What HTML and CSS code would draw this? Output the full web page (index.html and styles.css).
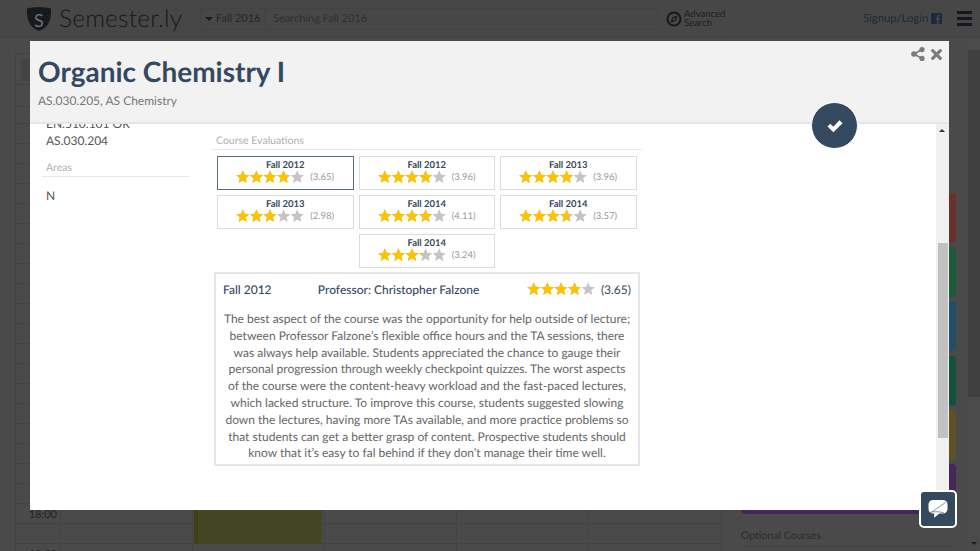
FILE: index.html
```html
<!DOCTYPE html>
<html lang="en">
<head>
    <meta charset="UTF-8">
    <meta name="viewport" content="width=device-width, initial-scale=1.0">
    <title>Semester.ly</title>
    <link rel="stylesheet" href="styles.css">
</head>
<body>
    <svg class="defs" width="0" height="0">
        <symbol id="five" viewBox="0 0 68 14">
            <path id="st" d="M6.800 .3L8.680 4.710 13.460 5.140 9.840 8.290 10.910 12.960 6.800 10.500 2.690 12.960 3.760 8.290 .14 5.140 4.920 4.710z"/>
            <use href="#st" x="13.600"/>
            <use href="#st" x="27.200"/>
            <use href="#st" x="40.800"/>
            <use href="#st" x="54.400"/>
        </symbol>
    </svg>

    <header class="topbar">
        <svg class="logo" viewBox="0 0 26 26">
            <path d="M1 2.500C6 .8 20 .8 25 2.500c.3 10-1 18-12 22.500C2 20.500 .7 12.500 1 2.500z" fill="#161a1e"/>
            <text x="13" y="21" text-anchor="middle" class="logo-s">S</text>
        </svg>
        <span class="brand">Semester.ly</span>
        <div class="search">
            <span class="term"><i class="caret"></i>Fall 2016</span>
            <span class="search-text">Searching Fall 2016</span>
        </div>
        <div class="advanced">
            <svg width="16" height="16" viewBox="0 0 16 16">
                <circle cx="8" cy="8" r="6.500" fill="none" stroke="#15181b" stroke-width="2"/>
                <path d="M10.500 5.500L9.300 9.300 5.500 10.500 6.700 6.700z" fill="none" stroke="#15181b" stroke-width="1.200"/>
            </svg>
            <span class="advanced-text">Advanced<br>Search</span>
        </div>
        <span class="login">Signup/Login</span>
        <svg class="fb" viewBox="0 0 12 12">
            <path d="M1.500 0h9A1.500 1.500 0 0 1 12 1.500v9a1.500 1.500 0 0 1-1.500 1.500H8.300V7.400h1.500l.2-1.800H8.300V4.500c0-.5.2-.9.9-.9h.9V2c-.4 0-.8-.1-1.300-.1-1.400 0-2.300.9-2.300 2.400v1.300H5v1.800h1.500V12h-5A1.500 1.500 0 0 1 0 10.500v-9A1.500 1.500 0 0 1 1.500 0z" fill="#1c2a3c"/>
        </svg>
        <div class="burger"><i></i><i></i><i></i></div>
    </header>

    <div class="page">
        <section class="calendar">
            <div class="cal-edge">
                <div class="cal-tool"><i></i></div>
                <div class="cal-tool-low"></div>
            </div>
            <div class="cal-grid">
                <div class="times"><span>18:00</span><span>19:00</span></div>
                <div class="day"></div>
                <div class="day"><div class="slot"></div></div>
                <div class="day"></div>
                <div class="day"></div>
                <div class="day"></div>
            </div>
        </section>
        <aside class="side">
            <div class="side-list">
                <div class="side-slot red"></div>
                <div class="side-slot green"></div>
                <div class="side-slot blue"></div>
                <div class="side-slot teal"></div>
                <div class="side-slot gold"></div>
                <div class="side-slot purple"></div>
                <div class="side-title">Optional Courses</div>
                <div class="side-slot olive"></div>
            </div>
            <div class="side-scroll">
                <div class="side-thumb"></div>
                <i class="side-arrow"></i>
            </div>
        </aside>
    </div>

    <div class="modal">
        <div class="modal-head">
            <h1>Organic Chemistry I</h1>
            <p>AS.030.205, AS Chemistry</p>
            <div class="modal-actions">
                <svg width="14" height="14" viewBox="0 0 14 14">
                    <path d="M11 2.500L3 7l8 4.500" fill="none" stroke="#7b7b7b" stroke-width="1.600"/>
                    <circle cx="11" cy="2.600" r="2.600" fill="#7b7b7b"/>
                    <circle cx="3" cy="7" r="2.800" fill="#7b7b7b"/>
                    <circle cx="11" cy="11.400" r="2.600" fill="#7b7b7b"/>
                </svg>
                <svg width="11" height="11" viewBox="0 0 11 11">
                    <path d="M1.700 1.700l7.600 7.600M9.300 1.700L1.700 9.300" stroke="#7b7b7b" stroke-width="3.200" stroke-linecap="round"/>
                </svg>
            </div>
        </div>
        <div class="modal-body">
            <div class="modal-scroll">
                <div class="info">
                    <div class="info-text">EN.510.101 OR<br>AS.030.204</div>
                    <h3 class="info-label">Areas</h3>
                    <div class="info-text">N</div>
                </div>
                <div class="evals">
                    <h3 class="evals-label">Course Evaluations</h3>
                    <div class="eval-grid">
                        <div class="eval selected">
                            <div class="eval-term">Fall 2012</div>
                            <div class="eval-row"><span class="stars"><svg><use href="#five"/></svg><span class="stars-on" style="width:76%"><svg><use href="#five"/></svg></span></span><span>(3.65)</span></div>
                        </div>
                        <div class="eval">
                            <div class="eval-term">Fall 2012</div>
                            <div class="eval-row"><span class="stars"><svg><use href="#five"/></svg><span class="stars-on" style="width:79%"><svg><use href="#five"/></svg></span></span><span>(3.96)</span></div>
                        </div>
                        <div class="eval">
                            <div class="eval-term">Fall 2013</div>
                            <div class="eval-row"><span class="stars"><svg><use href="#five"/></svg><span class="stars-on" style="width:79%"><svg><use href="#five"/></svg></span></span><span>(3.96)</span></div>
                        </div>
                        <div class="eval">
                            <div class="eval-term">Fall 2013</div>
                            <div class="eval-row"><span class="stars"><svg><use href="#five"/></svg><span class="stars-on" style="width:59.600%"><svg><use href="#five"/></svg></span></span><span>(2.98)</span></div>
                        </div>
                        <div class="eval">
                            <div class="eval-term">Fall 2014</div>
                            <div class="eval-row"><span class="stars"><svg><use href="#five"/></svg><span class="stars-on" style="width:79%"><svg><use href="#five"/></svg></span></span><span>(4.11)</span></div>
                        </div>
                        <div class="eval">
                            <div class="eval-term">Fall 2014</div>
                            <div class="eval-row"><span class="stars"><svg><use href="#five"/></svg><span class="stars-on" style="width:73%"><svg><use href="#five"/></svg></span></span><span>(3.57)</span></div>
                        </div>
                        <div class="eval middle">
                            <div class="eval-term">Fall 2014</div>
                            <div class="eval-row"><span class="stars"><svg><use href="#five"/></svg><span class="stars-on" style="width:64.800%"><svg><use href="#five"/></svg></span></span><span>(3.24)</span></div>
                        </div>
                    </div>
                    <div class="review">
                        <div class="review-head">
                            <span class="review-term">Fall 2012</span>
                            <span class="review-prof">Professor: Christopher Falzone</span>
                            <span class="stars"><svg><use href="#five"/></svg><span class="stars-on" style="width:76%"><svg><use href="#five"/></svg></span></span>
                            <span class="review-score">(3.65)</span>
                        </div>
                        <p>The best aspect of the course was the opportunity for help outside of lecture; between Professor Falzone’s flexible office hours and the TA sessions, there was always help available. Students appreciated the chance to gauge their personal progression through weekly checkpoint quizzes. The worst aspects of the course were the content-heavy workload and the fast-paced lectures, which lacked structure. To improve this course, students suggested slowing down the lectures, having more TAs available, and more practice problems so that students can get a better grasp of content. Prospective students should know that it’s easy to fal behind if they don’t manage their time well.</p>
                    </div>
                </div>
            </div>
            <div class="modal-bar">
                <i class="modal-arrow"></i>
                <div class="modal-thumb"></div>
            </div>
        </div>
        <button class="add-btn" type="button">
            <svg width="18" height="14" viewBox="0 0 18 14">
                <path d="M1.500 7.500l2.800-2.800 3 3L13.500 1.300 16.500 4.200 7.400 13.300z" fill="#fff"/>
            </svg>
        </button>
    </div>

    <button class="chat" type="button">
        <svg width="20" height="20" viewBox="0 0 20 20">
            <path d="M5 1h10a4.500 4.500 0 0 1 4.500 4.500v4.500a4.500 4.500 0 0 1-4.500 4.500h-3.500l-5.500 4.200.3-4.200H5A4.500 4.500 0 0 1 .5 10V5.500A4.500 4.500 0 0 1 5 1z" fill="#fff"/>
            <path d="M1.500 14.500L17.500 3.500M4 13c3-.5 8-.5 12 1" fill="none" stroke="#34495e" stroke-width=".6"/>
        </svg>
    </button>
</body>
</html>
```

FILE: styles.css
```css
* {
    box-sizing: border-box;
}
html, body {
    margin: 0;
    height: 100%;
    overflow: hidden;
}
body {
    font-family: Lato, "Open Sans", sans-serif;
    text-rendering: geometricPrecision;
    background-color: #4a4a4a;
    display: flex;
    flex-direction: column;
}
.defs {
    position: absolute;
}

/* dimmed page behind the modal */
.topbar {
    height: 38px;
    flex: none;
    display: flex;
    align-items: center;
    padding-left: 26px;
    background-color: #474747;
    border-bottom: 1px solid #434343;
}
.logo {
    width: 26px;
    height: 26px;
}
.logo-s {
    font-size: 18px;
    fill: #6b6f73;
}
.brand {
    margin-left: 7px;
    width: 141px;
    font-size: 24.500px;
    font-weight: 300;
    letter-spacing: .2px;
    color: #15181c;
}
.search {
    width: 459px;
    height: 22px;
    display: flex;
    align-items: center;
    border: 1px solid #434343;
    font-size: 11px;
}
.term {
    width: 64px;
    height: 100%;
    display: flex;
    align-items: center;
    padding-left: 4px;
    border-right: 1px solid #434343;
    color: #262626;
}
.caret {
    margin-right: 3px;
    border: 4px solid transparent;
    border-top: 4px solid #1a1a1a;
    border-bottom: 0;
}
.search-text {
    margin-left: 8px;
    color: #303030;
}
.advanced {
    margin-left: 7px;
    width: 197px;
    display: flex;
    align-items: center;
    gap: 2px;
}
.advanced-text {
    font-size: 9.500px;
    line-height: 9px;
    color: #202020;
}
.login {
    font-size: 11.300px;
    color: #1c2a3c;
}
.fb {
    margin-left: 3px;
    width: 11px;
    height: 11px;
}
.burger {
    margin-left: 15px;
    width: 15px;
    display: flex;
    flex-direction: column;
    gap: 3.500px;
}
.burger i {
    height: 2.500px;
    background-color: #15181c;
}
.page {
    flex: 1;
    min-height: 0;
    display: flex;
}
.calendar {
    width: 722px;
    flex: none;
    padding-left: 15px;
    border-right: 1px solid #434343;
    display: flex;
    flex-direction: column;
}
.cal-edge {
    height: 69px;
    flex: none;
    padding-top: 15px;
}
.cal-tool {
    height: 32px;
    padding: 5px;
    border: 1px solid #434343;
    border-right: 0;
}
.cal-tool i {
    display: block;
    height: 22px;
    background-color: #444;
}
.cal-tool-low {
    height: 22px;
    border: 1px solid #434343;
    border-top: 0;
    border-right: 0;
}
.cal-grid {
    flex: 1;
    display: flex;
    border-left: 1px solid #434343;
    background-image: repeating-linear-gradient(to bottom, transparent 0, transparent 19px, #434343 19px, #434343 20px);
    background-position: 0 -3px;
}
.times {
    width: 44px;
    padding-top: 398px;
    display: flex;
    flex-direction: column;
}
.times span {
    height: 40px;
    flex: none;
    line-height: 20px;
    text-align: right;
    padding-right: 3px;
    font-size: 11px;
    color: #222;
}
.day {
    width: 132px;
    flex: none;
    position: relative;
    border-left: 1px solid #434343;
}
.slot {
    position: absolute;
    left: 1px;
    width: 128px;
    top: 340px;
    height: 97px;
    background-color: #434622;
    border-left: 4px solid #3d4212;
    border-radius: 0 0 3px 3px;
}
.side {
    flex: 1;
    min-width: 0;
    display: flex;
}
.side-list {
    flex: 1;
    padding: 155px 12px 0 19px;
}
.side-slot {
    height: 50px;
    margin-bottom: 4.200px;
    border-radius: 4px;
}
.red { background-color: #6a3030; }
.green { background-color: #1d5a3a; }
.blue { background-color: #234f66; }
.teal { background-color: #14503d; }
.gold { background-color: #5c5226; }
.purple { background-color: #45285a; }
.olive { background-color: #5c5e12; margin-top: 6px; }
.side-title {
    height: 29px;
    padding-top: 12px;
    font-size: 10.500px;
    color: #2c2c2c;
    border-bottom: 1px solid #434343;
}
.side-scroll {
    width: 12px;
    flex: none;
    position: relative;
    background-color: #4b4b4b;
}
.side-thumb {
    height: 347px;
    background-color: #3f3f3f;
    margin-top: 12px;
}
.side-arrow {
    position: absolute;
    left: 3px;
    bottom: 6px;
    border: 3px solid transparent;
    border-top: 3px solid #1c1c1c;
    border-bottom: 0;
}

/* modal */
.modal {
    position: absolute;
    left: 30px;
    top: 41px;
    width: 919px;
    height: 469px;
    display: flex;
    flex-direction: column;
    background-color: #fff;
}
.modal-head {
    height: 83px;
    flex: none;
    position: relative;
    padding: 13px 0 0 8px;
    background-color: #f2f2f2;
    border-bottom: 2px solid #e6e6e6;
}
h1 {
    margin: 0;
    font-size: 28px;
    line-height: 34px;
    font-weight: 700;
    color: #34495e;
}
.modal-head p {
    margin: 4px 0 0;
    font-size: 12px;
    line-height: 18px;
    color: #777;
}
.modal-actions {
    position: absolute;
    top: 6px;
    right: 7px;
    display: flex;
    align-items: center;
    gap: 6px;
}
.modal-body {
    flex: 1;
    min-height: 0;
    display: flex;
}
.modal-scroll {
    flex: 1;
    min-width: 0;
    overflow: hidden;
    display: flex;
    padding-left: 12px;
}
.info {
    width: 147px;
    flex: none;
    margin-top: -9px;
}
.info-text {
    padding-left: 4px;
    font-size: 12px;
    line-height: 17px;
    color: #555;
}
.info-label {
    margin: 12px 0 10px;
    padding: 0 0 1px 4px;
    font-size: 10.500px;
    line-height: 14px;
    font-weight: 400;
    color: #b0b0b0;
    border-bottom: 1px solid #e8e8e8;
}
.evals {
    width: 430px;
    margin-left: 23px;
}
.evals-label {
    margin: 10px 0 6px;
    padding: 0 0 1px 4px;
    font-size: 10.500px;
    line-height: 14px;
    font-weight: 400;
    color: #b0b0b0;
    border-bottom: 1px solid #e8e8e8;
}
.eval-grid {
    width: 420px;
    margin-left: 5px;
    display: grid;
    grid-template-columns: repeat(3, 136.500px);
    gap: 5px 5px;
}
.eval {
    height: 34px;
    border: 1px solid #dcdcdc;
    text-align: center;
}
.eval.selected {
    border: 1.500px solid #5a6c80;
}
.eval.middle {
    grid-column: 2;
}
.eval-term {
    margin-top: 2px;
    font-size: 9.500px;
    line-height: 13px;
    font-weight: 700;
    color: #34495e;
}
.eval-row {
    margin-top: -2px;
    display: flex;
    justify-content: center;
    align-items: center;
    gap: 6px;
    font-size: 9.500px;
    color: #999;
}
.stars {
    position: relative;
    display: block;
    width: 68px;
    height: 14px;
    fill: #c4c4c4;
}
.stars svg {
    display: block;
    width: 68px;
    height: 14px;
}
.stars-on {
    position: absolute;
    left: 0;
    top: 0;
    height: 14px;
    overflow: hidden;
    fill: #fdc300;
}
.review {
    width: 426px;
    height: 194px;
    margin: 4px 0 0 2px;
    padding: 0 7px 0 7px;
    border: 2px solid #e6e6e6;
}
.review-head {
    display: flex;
    align-items: center;
    height: 28px;
    padding-top: 2px;
    font-size: 12px;
    font-weight: 500;
    color: #34495e;
}
.review-term {
    width: 95.500px;
}
.review-prof {
    width: 210.500px;
}
.review-score {
    margin-left: 6px;
    font-weight: 400;
}
.review p {
    margin: 9px 0 0;
    font-size: 12px;
    line-height: 16.800px;
    text-align: center;
    color: #666;
}
.modal-bar {
    width: 13px;
    flex: none;
    position: relative;
    padding: 119px 1px 0 2px;
    background-color: #f0f0f0;
}
.modal-arrow {
    position: absolute;
    left: 3px;
    top: 5px;
    border: 3px solid transparent;
    border-bottom: 3px solid #333;
    border-top: 0;
}
.modal-thumb {
    height: 195px;
    background-color: #c1c1c1;
}
.add-btn {
    position: absolute;
    left: 781px;
    top: 61px;
    width: 47px;
    height: 47px;
    padding: 0;
    display: flex;
    align-items: center;
    justify-content: center;
    border: 1px solid #fff;
    border-radius: 50%;
    background-color: #34495e;
}
.chat {
    position: absolute;
    left: 919px;
    top: 490px;
    width: 38px;
    height: 38px;
    padding: 0;
    display: flex;
    align-items: center;
    justify-content: center;
    border: 2px solid #fff;
    border-radius: 5px;
    background-color: #34495e;
}
```
